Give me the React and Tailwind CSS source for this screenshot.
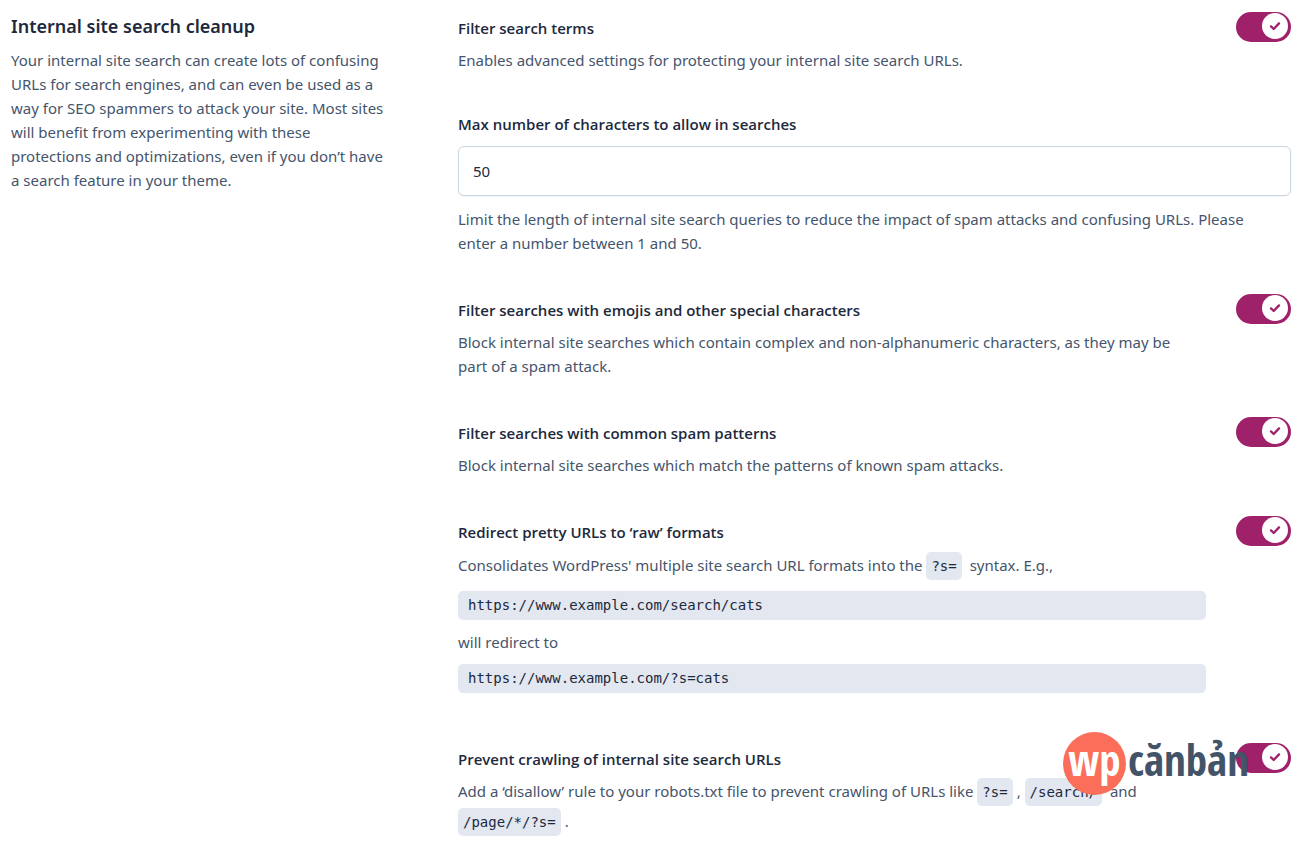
import React, { useState } from "react";

function Toggle({ id, label }) {
  const [on, setOn] = useState(true);
  return (
    <button
      id={id}
      type="button"
      role="switch"
      aria-checked={on}
      aria-label={label}
      onClick={() => setOn(!on)}
      className={
        "flex h-[30px] w-[55px] shrink-0 items-center rounded-full px-[3px] pt-px pb-[3px] " +
        (on ? "justify-end bg-[#9e2169]" : "justify-start bg-slate-300")
      }
    >
      <span className="flex size-[26px] items-center justify-center rounded-full bg-white">
        <svg width="12" height="12" viewBox="0 0 12 12" fill="none" aria-hidden="true">
          <path
            d="M2 6.4 4.7 9 10 3.4"
            stroke="#9e2169"
            strokeWidth="2.3"
            strokeLinecap="round"
            strokeLinejoin="round"
          />
        </svg>
      </span>
    </button>
  );
}

function SettingRow({ id, title, children }) {
  return (
    <div className="flex items-start gap-[30px]">
      <div className="min-w-0 flex-1 pt-[6px]">
        <label
          htmlFor={id}
          className="block font-['Open_Sans',sans-serif] leading-5 font-semibold text-slate-800"
        >
          {title}
        </label>
        {children}
      </div>
      <Toggle id={id} label={title} />
    </div>
  );
}

function Code({ children }) {
  return (
    <code className="mr-1 rounded-[5px] bg-[#e2e7f0] px-[5px] py-[6px] font-['DejaVu_Sans_Mono',monospace] text-[14px] leading-none text-slate-800">
      {children}
    </code>
  );
}

function CodeBlock({ children }) {
  return (
    <code className="block rounded-[5px] bg-[#e2e7f0] px-[10px] font-['DejaVu_Sans_Mono',monospace] text-[14px] leading-[29px] text-slate-800">
      {children}
    </code>
  );
}

function Watermark() {
  return (
    <div className="pointer-events-none absolute top-[-11px] right-[42px] flex items-center gap-[2px] font-['Open_Sans_Condensed','Liberation_Sans_Narrow','Open_Sans',sans-serif] text-[43px] leading-[52px] font-bold">
      <span className="flex size-[63px] items-center justify-center rounded-full bg-[#fa6e5a] pb-2 text-white">
        wp
      </span>
      <span className="pb-2 text-[#445468]">cănbản</span>
    </div>
  );
}

export default function App() {
  return (
    <main className="grid grid-cols-3 gap-[61px] bg-white px-3 pt-3 pl-[11px] font-['Noto_Sans','Open_Sans',sans-serif] text-[15px] leading-6 text-slate-600">
      <section>
        <h2 className="text-[18px] leading-7 font-semibold text-slate-800">
          Internal site search cleanup
        </h2>
        <p className="mt-2 pr-3">
          Your internal site search can create lots of confusing URLs for search engines, and can
          even be used as a way for SEO spammers to attack your site. Most sites will benefit from
          experimenting with these protections and optimizations, even if you don’t have a search
          feature in your theme.
        </p>
      </section>

      <section className="col-span-2 flex flex-col gap-[39px]">
        <SettingRow id="filter-terms" title="Filter search terms">
          <p className="mt-[10px] pr-3">
            Enables advanced settings for protecting your internal site search URLs.
          </p>
        </SettingRow>

        <div className="pt-[3px]">
          <label
            htmlFor="max-chars"
            className="block font-['Open_Sans',sans-serif] leading-5 font-semibold text-slate-800"
          >
            Max number of characters to allow in searches
          </label>
          <input
            id="max-chars"
            type="text"
            inputMode="numeric"
            defaultValue="50"
            className="mt-3 block h-[50px] w-full rounded-md border border-slate-300 px-[14px] text-slate-800 shadow-xs"
          />
          <p className="mt-[11px] pr-6">
            Limit the length of internal site search queries to reduce the impact of spam attacks
            and confusing URLs. Please enter a number between 1 and 50.
          </p>
        </div>

        <SettingRow
          id="filter-emojis"
          title="Filter searches with emojis and other special characters"
        >
          <p className="mt-[10px] pr-3">
            Block internal site searches which contain complex and non-alphanumeric characters, as
            they may be part of a spam attack.
          </p>
        </SettingRow>

        <SettingRow id="filter-patterns" title="Filter searches with common spam patterns">
          <p className="mt-[10px] pr-3">
            Block internal site searches which match the patterns of known spam attacks.
          </p>
        </SettingRow>

        <SettingRow id="redirect-pretty" title="Redirect pretty URLs to ‘raw’ formats">
          <div className="mt-2 pb-[11px]">
            <p className="leading-[30px]">
              Consolidates WordPress' multiple site search URL formats into the <Code>?s=</Code>{" "}
              syntax. E.g.,
            </p>
            <div className="mt-[11px]">
              <CodeBlock>https://www.example.com/search/cats</CodeBlock>
            </div>
            <p className="my-[10px]">will redirect to</p>
            <CodeBlock>https://www.example.com/?s=cats</CodeBlock>
          </div>
        </SettingRow>

        <div className="relative">
          <SettingRow id="prevent-crawling" title="Prevent crawling of internal site search URLs">
            <p className="mt-[7px] leading-[30px]">
              Add a ‘disallow’ rule to your robots.txt file to prevent crawling of URLs like{" "}
              <Code>?s=</Code>, <Code>/search/</Code> and <Code>/page/*/?s=</Code>.
            </p>
          </SettingRow>
          <Watermark />
        </div>
      </section>
    </main>
  );
}
